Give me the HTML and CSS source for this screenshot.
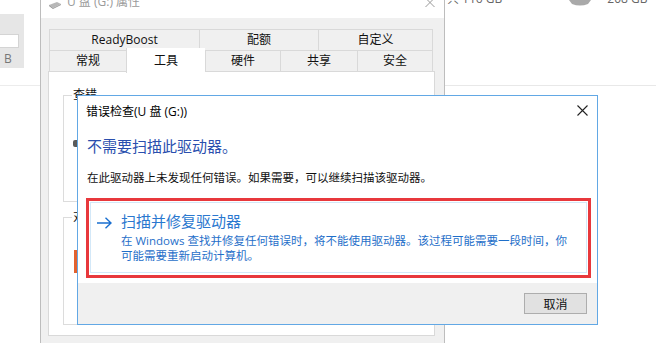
FILE: index.html
```html
<!doctype html>
<html>
    <head>
        <meta charset="UTF-8"/>
        <title>错误检查</title>
        <link rel="stylesheet" href="styles.css">
    </head>
    <body>
    <div class="desk">
        <div class="side">
            <div class="side-box">
                <div class="side-input"></div>
                <span class="side-unit">B</span>
            </div>
            <div class="side-rule"></div>
        </div>

        <div class="props">
            <div class="props-title">
                <svg class="drive-ico" width="14" height="8" viewBox="0 0 14 8">
                    <path d="M1 4 L9 1 L13 3 L5 7 Z" fill="#b8b8b8"/>
                    <path d="M1 4 L5 7 L5 8 L1 5 Z" fill="#8a8a8a"/>
                    <path d="M5 7 L13 3 L13 4 L5 8 Z" fill="#9a9a9a"/>
                </svg>
                <span class="props-name">U 盘 (G:) 属性</span>
                <svg class="props-close" width="10" height="10" viewBox="0 0 10 10">
                    <path d="M0.5 -2 L9.5 7 M9.5 -2 L0.5 7" stroke="#999" stroke-width="1"/>
                </svg>
            </div>
            <div class="props-body">
                <div class="tabs">
                    <div class="tab-row">
                        <span class="tab" style="width:150px">ReadyBoost</span>
                        <span class="tab" style="width:119px">配额</span>
                        <span class="tab last" style="width:115px">自定义</span>
                    </div>
                    <div class="tab-row low">
                        <span class="tab" style="width:77px">常规</span>
                        <span class="tab on" style="width:79px">工具</span>
                        <span class="tab" style="width:75px">硬件</span>
                        <span class="tab" style="width:77px">共享</span>
                        <span class="tab last" style="width:76px">安全</span>
                    </div>
                </div>
                <div class="tab-page">
                    <fieldset class="group first">
                        <legend>查错</legend>
                        <div class="stub dark"></div>
                    </fieldset>
                    <fieldset class="group second">
                        <legend>对驱动器进行优化和碎片整理</legend>
                        <div class="stub orange"></div>
                    </fieldset>
                </div>
            </div>
        </div>

        <div class="drives">
            <div class="drive-row">
                <span class="size-a">共 116 GB</span>
                <svg class="disk-ico" width="24" height="6" viewBox="0 0 24 6">
                    <path d="M1 0 L23 0 L20 4 Q12 7 4 4 Z" fill="#a9a9a9"/>
                </svg>
                <span class="size-b">208 GB</span>
            </div>
            <div class="drive-rule"></div>
        </div>

        <div class="dialog">
            <div class="dlg-title">
                <span>错误检查(U 盘 (G:))</span>
                <svg class="dlg-close" width="11" height="11" viewBox="0 0 11 11">
                    <path d="M0.5 0.5 L10.5 10.5 M10.5 0.5 L0.5 10.5" stroke="#222" stroke-width="1.1"/>
                </svg>
            </div>
            <div class="dlg-content">
                <div class="dlg-main">不需要扫描此驱动器。</div>
                <div class="dlg-text">在此驱动器上未发现任何错误。如果需要，可以继续扫描该驱动器。</div>
                <div class="mark">
                    <div class="cmd-link">
                        <svg class="cmd-arrow" width="15" height="12" viewBox="0 0 15 12">
                            <path d="M0 6 L14 6 M8.5 0.7 L14 6 L8.5 11.3" fill="none" stroke="#1a6fd0" stroke-width="1.4"/>
                        </svg>
                        <div class="cmd-text">
                            <div class="cmd-head">扫描并修复驱动器</div>
                            <div class="cmd-desc">在 Windows 查找并修复任何错误时，将不能使用驱动器。该过程可能需要一段时间，你可能需要重新启动计算机。</div>
                        </div>
                    </div>
                </div>
            </div>
            <div class="dlg-foot">
                <button class="btn">取消</button>
            </div>
        </div>
    </div>
    </body>
</html>
```

FILE: styles.css
```css
* {
    margin: 0px;
    padding: 0px;
    box-sizing: border-box;
}
body {
    background: #fff;
    font-family: "Open Sans", "Noto Sans CJK SC", sans-serif;
    font-size: 12px;
    color: #000;
}
.desk {
    position: relative;
    display: flex;
    width: 656px;
    height: 350px;
    overflow: hidden;
}

/* 左边露出来的一点窗口 */
.side {
    width: 40px;
    flex-shrink: 0;
}
.side-box {
    margin-top: 14px;
    width: 24px;
    height: 54px;
    background: #e6e6e6;
    padding-top: 20px;
}
.side-input {
    width: 19px;
    height: 14px;
    background: #fff;
    border: 1px solid #d4d4d4;
    border-left: none;
}
.side-unit {
    display: block;
    padding-left: 4px;
    line-height: 16px;
    margin-top: 3px;
    color: #777;
}
.side-rule {
    margin-top: 17px;
    height: 1px;
    background: #ececec;
}

/* 属性窗口 */
.props {
    width: 405px;
    height: 343px;
    flex-shrink: 0;
    display: flex;
    flex-direction: column;
    border-left: 1px solid #bdbdbd;
    border-right: 1px solid #bdbdbd;
    background: #f0f0f0;
}
.props-title {
    height: 18px;
    background: #fff;
    display: flex;
    align-items: flex-start;
    padding-left: 7px;
    color: #9a9a9a;
    font-size: 12px;
}
.drive-ico {
    margin-top: 1px;
}
.props-name {
    margin-left: 5px;
    line-height: 14px;
    margin-top: -5px;
}
.props-close {
    margin-left: auto;
    margin-right: 9px;
}
.props-body {
    flex: 1;
    padding: 11px 0 7px 7px;
    display: flex;
    flex-direction: column;
}
.tabs {
    margin-left: 1px;
    width: 384px;
}
.tab-row {
    display: flex;
    height: 22px;
}
.tab-row.low {
    height: 21px;
    position: relative;
    z-index: 2;
}
.tab {
    border: 1px solid #d9d9d9;
    border-right: none;
    height: 100%;
    text-align: center;
    line-height: 20px;
    color: #111;
    background: #f0f0f0;
}
.tab.last {
    border-right: 1px solid #d9d9d9;
}
.tab-row.low .tab {
    border-top: none;
}
.tab.on {
    background: #fff;
    border-top: 1px solid #d9d9d9;
    border-bottom: none;
    margin-top: -3px;
    height: 25px;
    line-height: 26px;
}
.tab.on + .tab {
    border-left: 1px solid #d9d9d9;
}
.tab-page {
    flex: 1;
    width: 387px;
    margin-left: 0;
    background: #fff;
    border: 1px solid #d9d9d9;
    margin-top: -1px;
    padding: 16px 0 0 14px;
}
.group {
    width: 357px;
    border: 1px solid #dcdcdc;
    padding: 0 8px;
}
.group legend {
    padding: 0 1px;
    line-height: 14px;
    color: #111;
}
.group.first {
    height: 114px;
}
.group.second {
    margin-top: 8px;
    height: 115px;
}
.stub {
    position: relative;
}
.stub.dark {
    margin: 38px 0 0 1px;
    width: 10px;
    height: 7px;
    background: #5a5a5a;
    border-radius: 2px;
}
.stub.orange {
    margin: 26px 0 0 2px;
    width: 10px;
    height: 23px;
    background: #e2622f;
}

/* 右边的驱动器信息 */
.drives {
    flex: 1;
}
.drive-row {
    display: flex;
    align-items: flex-start;
    height: 85px;
    color: #666;
    font-size: 12px;
}
.size-a {
    margin-left: 2px;
    line-height: 14px;
    margin-top: -8px;
}
.disk-ico {
    margin-left: 66px;
}
.size-b {
    margin-left: 15px;
    line-height: 14px;
    margin-top: -8px;
}
.drive-rule {
    height: 1px;
    background: #e8e8e8;
}

/* 错误检查对话框 */
.dialog {
    position: absolute;
    left: 77px;
    top: 95px;
    width: 521px;
    height: 230px;
    border: 1px solid #62a8e5;
    background: #fff;
    display: flex;
    flex-direction: column;
    z-index: 5;
}
.dlg-title {
    height: 29px;
    display: flex;
    align-items: center;
    padding: 0 9px 0 8px;
    font-size: 12px;
    color: #000;
}
.dlg-close {
    margin-left: auto;
}
.dlg-content {
    padding: 0 0 0 9px;
}
.dlg-main {
    margin-top: 11px;
    font-size: 15px;
    line-height: 20px;
    color: #2a4fae;
}
.dlg-text {
    margin-top: 14px;
    font-size: 11.5px;
    line-height: 16px;
    color: #111;
}
.mark {/*截图里的红框*/
    margin: 12px 0 0 -1px;
    width: 505px;
    height: 80px;
    border: 3px solid #e8383c;
    padding: 1px 1px 2px 1px;
}
.cmd-link {
    height: 100%;
    border: 1px solid #d3e8f8;
    display: flex;
    align-items: flex-start;
    padding: 8px 0 0 6px;
}
.cmd-arrow {
    margin-top: 6px;
    flex-shrink: 0;
}
.cmd-text {
    margin-left: 9px;
    width: 452px;
}
.cmd-head {
    font-size: 15px;
    line-height: 21px;
    color: #2a78cf;
}
.cmd-desc {
    margin-top: 1px;
    font-size: 11.5px;
    line-height: 15px;
    color: #1f6fc9;
}
.dlg-foot {
    margin-top: auto;
    height: 41px;
    background: #f0f0f0;
    display: flex;
    justify-content: flex-end;
    padding: 10px 10px 0 0;
}
.btn {
    width: 63px;
    height: 21px;
    border: 1px solid #adadad;
    background: #e1e1e1;
    font-family: "Noto Sans CJK SC", sans-serif;
    font-size: 12px;
    color: #111;
}
```
